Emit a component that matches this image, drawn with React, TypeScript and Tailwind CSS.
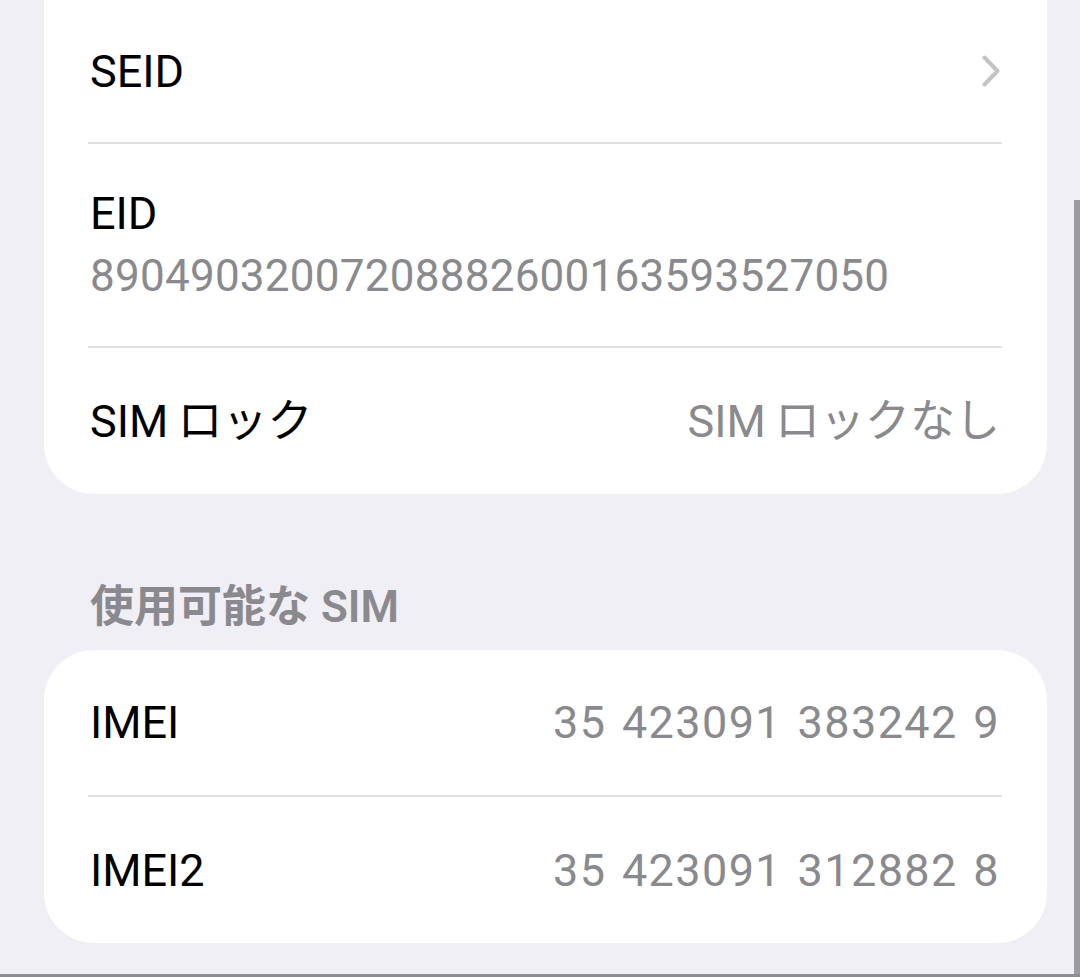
import React from "react";

const font = { fontFamily: '"Roboto", "Noto Sans CJK JP", sans-serif' };

function Chevron() {
  return (
    <svg width="18" height="32" viewBox="0 0 18 32" fill="none">
      <path d="M2.5 2.5 L15.5 16 L2.5 29.5" stroke="#c4c4c7" strokeWidth="4" strokeLinecap="round" strokeLinejoin="round" />
    </svg>
  );
}

function Separator() {
  return <div className="h-[2px] ml-[44px] mr-[45px] bg-[#dfdfe1]" />;
}

function Row({ label, value, height }: { label: string; value?: React.ReactNode; height: string }) {
  return (
    <div className={`flex items-center justify-between pl-[46px] pr-[47px] ${height}`}>
      <span className="text-[45px] leading-none text-black">{label}</span>
      {value}
    </div>
  );
}

export default function App() {
  return (
    <div className="relative w-[1080px] h-[977px] overflow-hidden bg-[#f0eff5]" style={font}>
      {/* first group, scrolled so its top is off screen */}
      <div className="ml-[44px] mr-[33px] bg-white rounded-b-[50px]">
        <Row label="SEID" height="h-[142px]" value={<Chevron />} />
        <Separator />
        <div className="h-[202px] flex flex-col justify-center pl-[46px]">
          <span className="text-[45px] leading-[63px] text-black">EID</span>
          <span className="text-[44px] leading-[63px] tracking-[0.25px] text-[#8a8a8e]">89049032007208882600163593527050</span>
        </div>
        <Separator />
        <Row
          label={"SIM\u2009ロック"}
          height="h-[146px]"
          value={<span className="text-[45px] leading-none text-[#8a8a8e]">{"SIM\u2009ロックなし"}</span>}
        />
      </div>

      <div className="h-[156px] flex items-end pl-[90px] pb-[21px]">
        <span className="text-[44px] leading-none font-semibold text-[#8a8a8e]">使用可能な SIM</span>
      </div>

      <div className="ml-[44px] mr-[33px] bg-white rounded-[50px]">
        <Row
          label="IMEI"
          height="h-[145px]"
          value={<span className="text-[45px] leading-none tracking-[1.4px] text-[#8a8a8e] [word-spacing:3px]">35 423091 383242 9</span>}
        />
        <Separator />
        <Row
          label="IMEI2"
          height="h-[146px]"
          value={<span className="text-[45px] leading-none tracking-[1.4px] text-[#8a8a8e] [word-spacing:3px]">35 423091 312882 8</span>}
        />
      </div>

      {/* scroll indicator and frame edge */}
      <div className="absolute right-0 top-[200px] bottom-0 w-[6px] bg-[#9c9ca0]" />
      <div className="absolute left-0 right-0 bottom-0 h-[3px] bg-[#8e8e92]" />
    </div>
  );
}
